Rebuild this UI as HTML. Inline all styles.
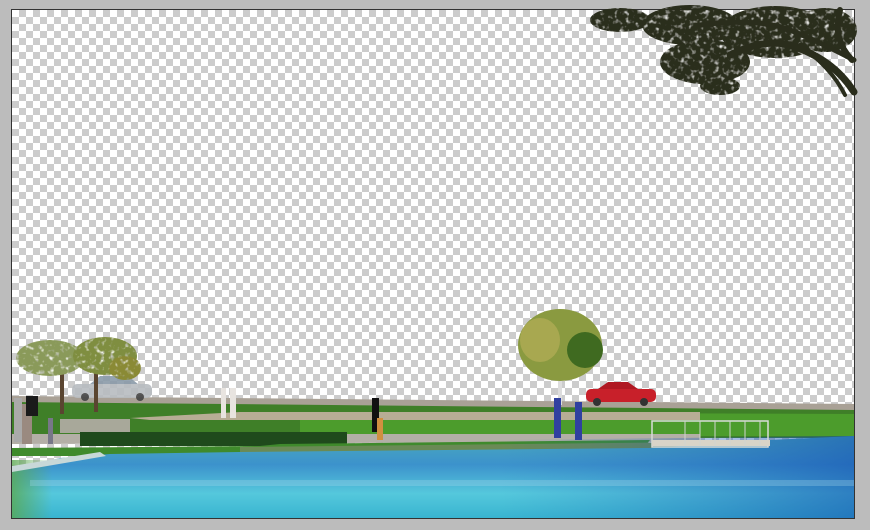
<!DOCTYPE html>
<html><head><meta charset="utf-8"><style>
html,body{margin:0;padding:0;width:870px;height:530px;overflow:hidden;background:#bcbcbc}
#cv{position:absolute;left:12px;top:10px;width:842px;height:508px;outline:1px solid #333;
background-color:#fff;
background-image:linear-gradient(45deg,#ccc 25%,transparent 25%,transparent 75%,#ccc 75%),linear-gradient(45deg,#ccc 25%,transparent 25%,transparent 75%,#ccc 75%);
background-size:14px 14px;background-position:0 0,7px 7px}
svg{position:absolute;left:0;top:0}
</style></head><body>
<div id="cv"></div>
<svg width="870" height="530" viewBox="0 0 870 530">
<defs>
<linearGradient id="w" x1="0" y1="0" x2="0" y2="1">
<stop offset="0" stop-color="#4aaabc"/><stop offset="0.35" stop-color="#3c92cc"/><stop offset="0.7" stop-color="#55c8dc"/><stop offset="1" stop-color="#38b4d0"/></linearGradient>
<linearGradient id="wr" x1="0" y1="0" x2="1" y2="0">
<stop offset="0" stop-color="#2a6fc0" stop-opacity="0"/><stop offset="1" stop-color="#1450b0" stop-opacity="0.6"/></linearGradient>
<linearGradient id="wl" x1="0" y1="0" x2="1" y2="0">
<stop offset="0" stop-color="#5aa850" stop-opacity="0.8"/><stop offset="1" stop-color="#5aa850" stop-opacity="0"/></linearGradient>
<filter id="sp"><feTurbulence type="fractalNoise" baseFrequency="0.2" numOctaves="2" result="n"/>
<feColorMatrix in="n" type="matrix" values="0 0 0 0 0 0 0 0 0 0 0 0 0 0 0 0 0 0 -3 2.6" result="m"/>
<feComposite in="SourceGraphic" in2="m" operator="in"/></filter>
</defs>
<polygon points="12,396 854,404 854,411 12,404" fill="#a9a196"/>
<polygon points="12,402 854,410 854,438 12,438" fill="#3f7f28"/>
<polygon points="300,412 854,414 854,436 300,436" fill="#4c9c2c"/>
<polygon points="130,418 240,412 700,412 700,420 150,420" fill="#b7ad95"/>
<rect x="60" y="419" width="70" height="14" fill="#a8a89a"/>
<polygon points="12,434 700,434 700,442 12,444" fill="#b3afa6"/>
<rect x="80" y="432" width="267" height="14" fill="#1f4a1c"/>
<polygon points="12,448 260,446 280,444 650,440 640,452 290,456 12,456" fill="#3f8a2c"/>
<polygon points="240,447 700,442 700,454 240,458" fill="#6a8a55"/>
<polygon points="12,470 60,458 110,454 240,452 650,448 770,440 854,436 854,518 12,518" fill="url(#w)"/>
<polygon points="500,440 854,436 854,518 500,518" fill="url(#wr)"/>
<rect x="12" y="460" width="40" height="58" fill="url(#wl)"/>
<polygon points="12,466 100,452 106,456 12,472" fill="#c8d8d8"/>
<rect x="30" y="480" width="824" height="6" fill="#a8dcec" opacity=".3"/>
<rect x="652" y="421" width="116" height="26" fill="none" stroke="#d8dcd8" stroke-width="1.5"/>
<rect x="652" y="440" width="118" height="6" fill="#d8d4c8"/>
<g stroke="#d0d4d0" stroke-width="1"><line x1="685" y1="421" x2="685" y2="445"/><line x1="700" y1="421" x2="700" y2="445"/><line x1="715" y1="421" x2="715" y2="445"/><line x1="730" y1="421" x2="730" y2="445"/><line x1="745" y1="421" x2="745" y2="445"/><line x1="760" y1="421" x2="760" y2="445"/></g>
<g opacity=".9"><rect x="72" y="384" width="80" height="14" rx="5" fill="#b8bcc0"/><path d="M90 384 L100 376 L128 376 L138 384Z" fill="#8a9aa8"/><circle cx="85" cy="397" r="4" fill="#444"/><circle cx="140" cy="397" r="4" fill="#444"/></g>
<g><rect x="586" y="389" width="70" height="13" rx="5" fill="#c8202a"/><path d="M598 389 L608 382 L628 382 L638 389Z" fill="#b01822"/><circle cx="597" cy="402" r="4" fill="#333"/><circle cx="644" cy="402" r="4" fill="#333"/></g>
<g><rect x="60" y="370" width="4" height="44" fill="#5a4530"/><rect x="94" y="370" width="4" height="42" fill="#5a4530"/>
<g filter="url(#sp)"><ellipse cx="50" cy="358" rx="34" ry="18" fill="#8a9a5a"/><ellipse cx="105" cy="356" rx="32" ry="19" fill="#7f8e40"/><ellipse cx="125" cy="368" rx="16" ry="12" fill="#8a8a35"/></g></g>
<g><rect x="558" y="360" width="4" height="45" fill="#ddd"/><ellipse cx="560" cy="345" rx="42" ry="36" fill="#8a9a40"/><ellipse cx="585" cy="350" rx="18" ry="18" fill="#3f6a20"/><ellipse cx="540" cy="340" rx="20" ry="22" fill="#a8a850"/></g>
<g fill="#2a2d1c" filter="url(#sp)">
<ellipse cx="620" cy="20" rx="30" ry="12"/>
<ellipse cx="690" cy="25" rx="48" ry="20"/>
<ellipse cx="705" cy="62" rx="45" ry="22"/>
<ellipse cx="720" cy="86" rx="20" ry="9"/>
<ellipse cx="775" cy="32" rx="55" ry="26"/>
<ellipse cx="825" cy="30" rx="32" ry="22"/>
</g>
<g fill="none" stroke="#2a2d1c" stroke-linecap="round">
<path d="M854 92 C840 70 820 55 790 45 C770 40 750 45 730 55" stroke-width="7"/>
<path d="M854 60 C835 50 815 40 790 30 C770 22 740 20 700 25" stroke-width="5"/>
<path d="M840 10 C835 30 838 45 852 60" stroke-width="6"/>
<path d="M800 45 C820 60 835 75 845 95" stroke-width="4"/>
</g>
<g fill="#e8e4e0"><rect x="221" y="388" width="5" height="30"/><rect x="230" y="388" width="6" height="30"/></g>
<g><rect x="14" y="398" width="8" height="44" fill="#aaa"/><rect x="22" y="404" width="10" height="40" fill="#9a8a80"/><rect x="48" y="418" width="5" height="26" fill="#778"/><rect x="26" y="396" width="12" height="20" fill="#1a1a1a"/></g>
<g><rect x="372" y="398" width="7" height="34" fill="#111"/><rect x="377" y="418" width="6" height="22" fill="#d09040"/></g>
<g fill="#3040a0"><rect x="554" y="398" width="7" height="40" /><rect x="575" y="402" width="7" height="38"/></g>
</svg>
</body></html>
